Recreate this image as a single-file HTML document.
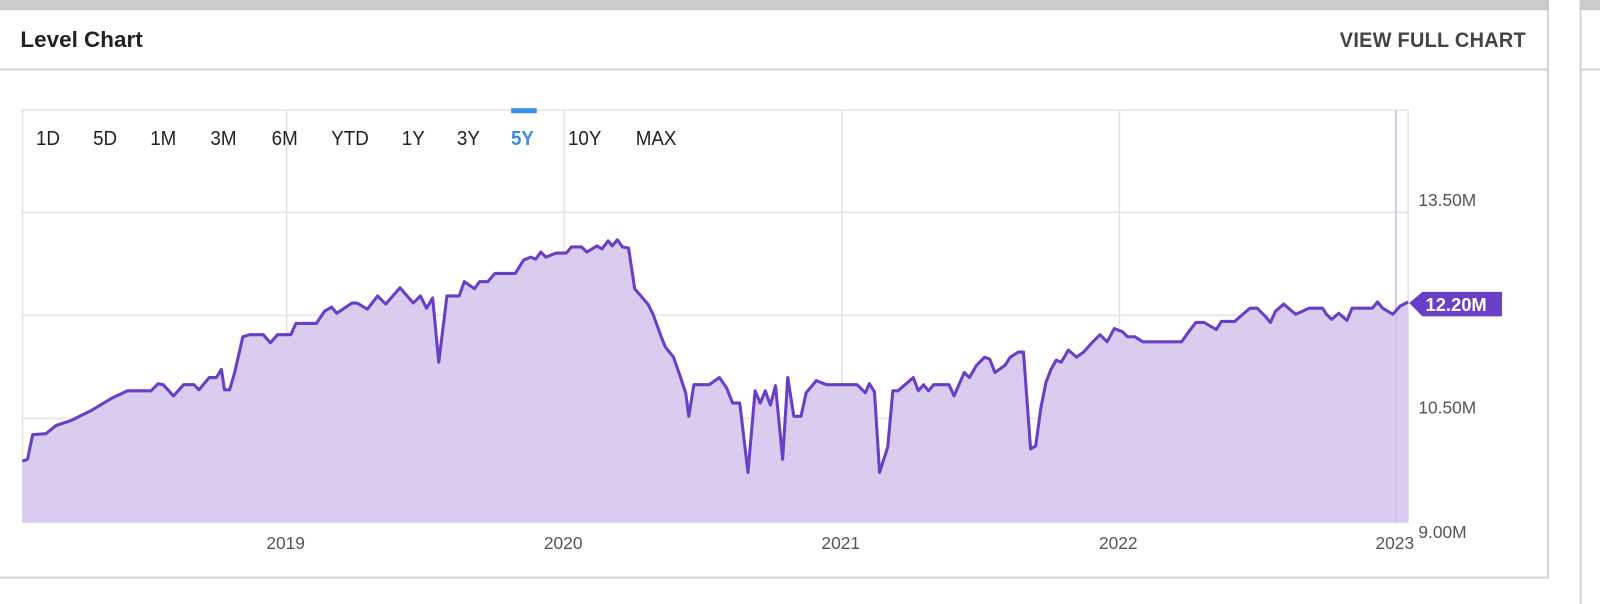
<!DOCTYPE html>
<html><head><meta charset="utf-8"><style>
html,body{margin:0;padding:0;width:1600px;height:592px;overflow:hidden;background:#fff;font-family:"Liberation Sans Narrow","Liberation Sans",sans-serif;}
#w{position:absolute;left:0;top:0;width:1568px;height:580px;transform:scale(1.0204);transform-origin:0 0}
.top{position:absolute;left:0;top:0;width:1518px;height:10px;background:#cbcbcb}
.top2{position:absolute;left:1548px;top:0;width:52px;height:10px;background:#cbcbcb}
.panel{position:absolute;left:0;top:10px;width:1516px;height:555px;border-right:2px solid #d4d4d4;border-bottom:2px solid #d4d4d4}
.p2{position:absolute;left:1548px;top:10px;width:52px;height:582px;border-left:2px solid #d4d4d4}
.hl{position:absolute;left:0;top:67px;width:1518px;height:2px;background:#d4d4d4}
.hl2{position:absolute;left:1550px;top:67px;width:50px;height:2px;background:#d4d4d4}
.title{position:absolute;left:20px;top:26px;font-size:22px;font-weight:bold;color:#222}
.view{position:absolute;left:1313px;top:28px;font-size:20.5px;font-weight:bold;color:#444;letter-spacing:.3px;white-space:nowrap;transform:scaleX(.95);transform-origin:left}
.btn{position:absolute;top:125px;font-size:20px;color:#222;transform:translateX(-50%) scaleX(.92)}
.ax{position:absolute;font-size:17px;color:#555}
</style></head><body><div id="w">
<div class="top"></div><div class="top2"></div>
<div class="panel"></div><div class="p2"></div>
<div class="hl"></div><div class="hl2"></div>
<div class="title">Level Chart</div>
<div class="view">VIEW FULL CHART</div>
<svg style="position:absolute;left:0;top:0" width="1568" height="580">
<g stroke="#e3e3e3" stroke-width="1.5" fill="none">
<rect x="22" y="108" width="1358" height="404"/>
<line x1="22" y1="208" x2="1380" y2="208"/><line x1="22" y1="309" x2="1380" y2="309"/><line x1="22" y1="410" x2="1380" y2="410"/>
<line x1="281" y1="108" x2="281" y2="512"/><line x1="553" y1="108" x2="553" y2="512"/><line x1="825" y1="108" x2="825" y2="512"/><line x1="1097" y1="108" x2="1097" y2="512"/><line x1="1368" y1="108" x2="1368" y2="512"/>
</g>
<path fill="#d9ccef" stroke="none" d="M22,452 L27,450 32,426 45,425 50,421 55,417 70,412 80,407 90,402 100,396 110,390 125,383 148,383 155,376 160,377 170,388 180,377 190,377 195,382 205,370 212,370 217,362 220,382 225,382 230,365 238,330 245,328 258,328 265,336 272,328 285,328 290,317 310,317 318,305 325,301 330,307 345,297 350,297 360,303 370,290 378,298 392,282 405,297 412,290 418,302 424,292 430,355 438,290 450,290 455,276 465,283 470,276 478,276 485,268 505,268 513,255 520,252 525,254 530,247 535,252 545,248 555,248 560,242 570,242 575,247 585,241 590,244 596,236 600,241 605,235 610,242 616,243 622,283 635,298 640,308 648,330 652,340 660,350 667,370 672,385 675,408 680,377 695,377 705,370 712,380 718,395 725,395 733,463 740,383 745,395 750,383 755,397 760,378 767,450 772,370 778,408 785,408 790,385 800,373 810,377 840,377 848,385 852,376 857,384 862,463 870,438 875,383 880,383 895,370 900,383 905,377 910,383 915,377 930,377 935,388 945,365 950,370 957,358 965,350 970,352 975,365 985,358 990,350 998,345 1003,345 1010,440 1015,437 1020,400 1025,375 1030,362 1035,353 1040,355 1047,343 1055,350 1062,345 1070,336 1078,328 1085,335 1092,322 1100,325 1105,330 1112,330 1120,335 1158,335 1165,325 1172,316 1180,316 1192,323 1197,315 1210,315 1218,308 1225,302 1232,302 1240,310 1245,316 1250,305 1258,298 1265,304 1270,308 1283,302 1296,302 1300,308 1305,313 1312,307 1320,314 1325,302 1345,302 1350,296 1355,302 1360,305 1365,308 1372,300 1380,296 L1380,512 L22,512 Z"/>
<line x1="1368" y1="108" x2="1368" y2="512" stroke="#c9bce6" stroke-width="1.5"/>
<path fill="none" stroke="#6a3fc8" stroke-width="3" stroke-linejoin="round" d="M22,452 L27,450 32,426 45,425 50,421 55,417 70,412 80,407 90,402 100,396 110,390 125,383 148,383 155,376 160,377 170,388 180,377 190,377 195,382 205,370 212,370 217,362 220,382 225,382 230,365 238,330 245,328 258,328 265,336 272,328 285,328 290,317 310,317 318,305 325,301 330,307 345,297 350,297 360,303 370,290 378,298 392,282 405,297 412,290 418,302 424,292 430,355 438,290 450,290 455,276 465,283 470,276 478,276 485,268 505,268 513,255 520,252 525,254 530,247 535,252 545,248 555,248 560,242 570,242 575,247 585,241 590,244 596,236 600,241 605,235 610,242 616,243 622,283 635,298 640,308 648,330 652,340 660,350 667,370 672,385 675,408 680,377 695,377 705,370 712,380 718,395 725,395 733,463 740,383 745,395 750,383 755,397 760,378 767,450 772,370 778,408 785,408 790,385 800,373 810,377 840,377 848,385 852,376 857,384 862,463 870,438 875,383 880,383 895,370 900,383 905,377 910,383 915,377 930,377 935,388 945,365 950,370 957,358 965,350 970,352 975,365 985,358 990,350 998,345 1003,345 1010,440 1015,437 1020,400 1025,375 1030,362 1035,353 1040,355 1047,343 1055,350 1062,345 1070,336 1078,328 1085,335 1092,322 1100,325 1105,330 1112,330 1120,335 1158,335 1165,325 1172,316 1180,316 1192,323 1197,315 1210,315 1218,308 1225,302 1232,302 1240,310 1245,316 1250,305 1258,298 1265,304 1270,308 1283,302 1296,302 1300,308 1305,313 1312,307 1320,314 1325,302 1345,302 1350,296 1355,302 1360,305 1365,308 1372,300 1380,296"/>
<path fill="#6a3fc8" d="M1381,297 L1394,286 L1472,286 L1472,310 L1394,310 Z"/>
<text x="1397" y="305" fill="#fff" font-size="18" font-weight="bold" font-family="Liberation Sans, sans-serif">12.20M</text>
<rect x="501" y="106" width="25" height="5" fill="#3a8ee6"/>
</svg>
<div class="btn" style="left:47px">1D</div>
<div class="btn" style="left:103px">5D</div>
<div class="btn" style="left:160px">1M</div>
<div class="btn" style="left:219px">3M</div>
<div class="btn" style="left:279px">6M</div>
<div class="btn" style="left:343px">YTD</div>
<div class="btn" style="left:405px">1Y</div>
<div class="btn" style="left:459px">3Y</div>
<div class="btn" style="left:512px;color:#3a8ee6;font-weight:bold">5Y</div>
<div class="btn" style="left:573px">10Y</div>
<div class="btn" style="left:643px">MAX</div>
<div class="ax" style="left:1390px;top:187px">13.50M</div>
<div class="ax" style="left:1390px;top:390px">10.50M</div>
<div class="ax" style="left:1390px;top:512px">9.00M</div>
<div class="ax" style="left:261px;top:523px">2019</div>
<div class="ax" style="left:533px;top:523px">2020</div>
<div class="ax" style="left:805px;top:523px">2021</div>
<div class="ax" style="left:1077px;top:523px">2022</div>
<div class="ax" style="left:1348px;top:523px">2023</div>
</div></body></html>
